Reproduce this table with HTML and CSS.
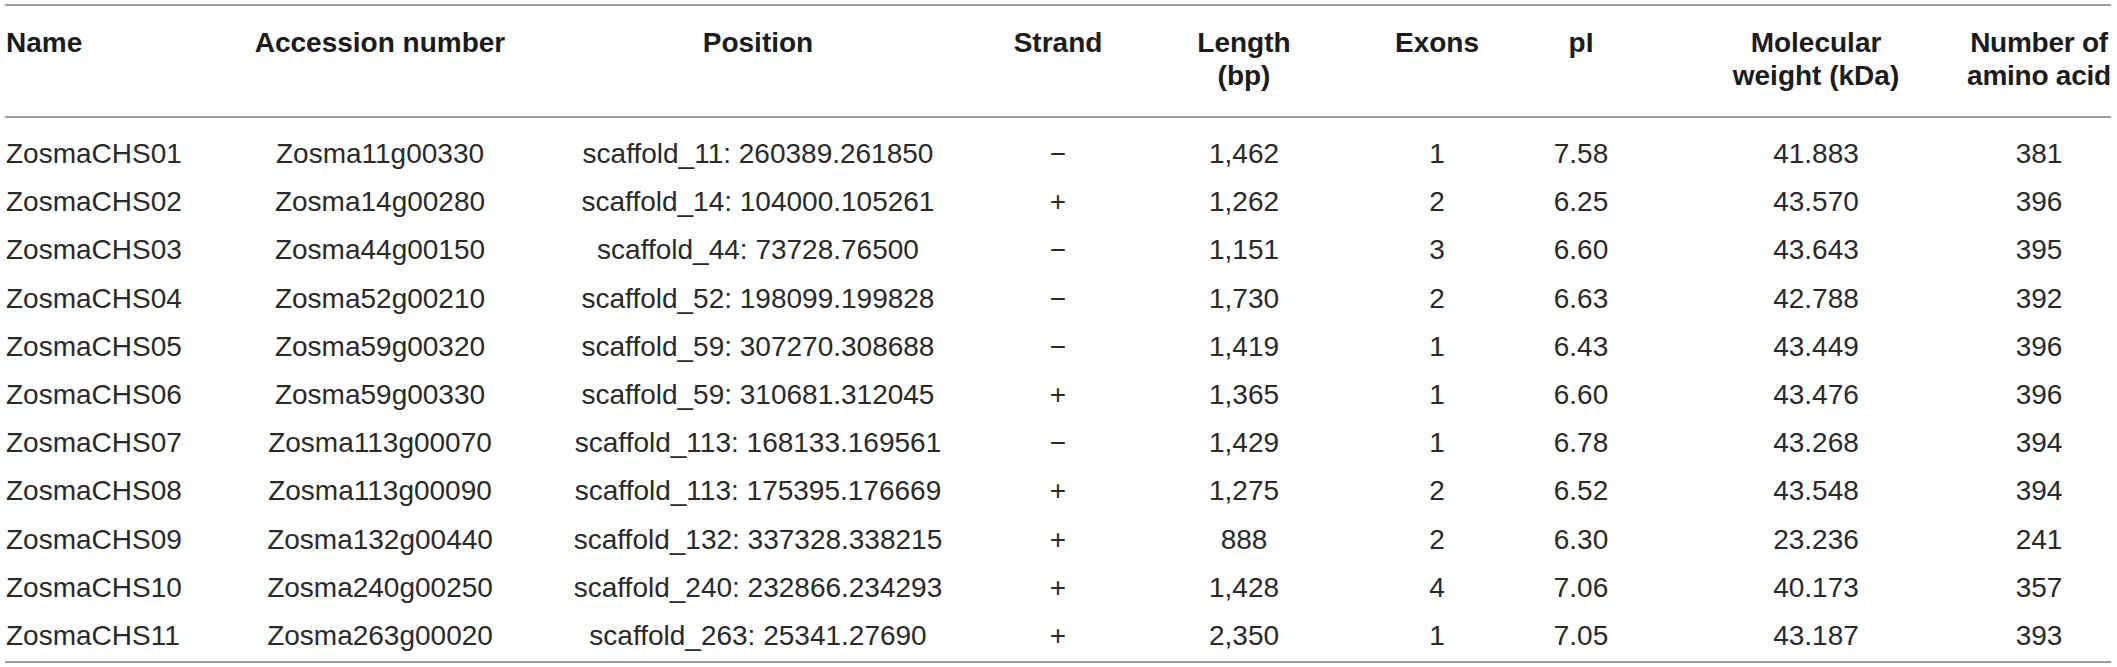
FILE: index.html
```html
<!DOCTYPE html>
<html lang="en">
<head>
<meta charset="utf-8">
<title>CHS genes</title>
<link rel="stylesheet" href="styles.css">
</head>
<body>
<table class="gene-table">
  <colgroup>
    <col class="c-name">
    <col class="c-acc">
    <col class="c-pos">
    <col class="c-strand">
    <col class="c-len">
    <col class="c-exon">
    <col class="c-pi">
    <col class="c-mw">
    <col class="c-aa">
  </colgroup>
  <thead>
    <tr>
      <th class="left">Name</th>
      <th>Accession number</th>
      <th>Position</th>
      <th>Strand</th>
      <th>Length<br>(bp)</th>
      <th>Exons</th>
      <th>pI</th>
      <th>Molecular<br>weight (kDa)</th>
      <th class="tight">Number of<br>amino acid</th>
    </tr>
  </thead>
  <tbody>
    <tr><td class="left">ZosmaCHS01</td><td>Zosma11g00330</td><td>scaffold_11: 260389.261850</td><td>−</td><td>1,462</td><td>1</td><td>7.58</td><td>41.883</td><td>381</td></tr>
    <tr><td class="left">ZosmaCHS02</td><td>Zosma14g00280</td><td>scaffold_14: 104000.105261</td><td>+</td><td>1,262</td><td>2</td><td>6.25</td><td>43.570</td><td>396</td></tr>
    <tr><td class="left">ZosmaCHS03</td><td>Zosma44g00150</td><td>scaffold_44: 73728.76500</td><td>−</td><td>1,151</td><td>3</td><td>6.60</td><td>43.643</td><td>395</td></tr>
    <tr><td class="left">ZosmaCHS04</td><td>Zosma52g00210</td><td>scaffold_52: 198099.199828</td><td>−</td><td>1,730</td><td>2</td><td>6.63</td><td>42.788</td><td>392</td></tr>
    <tr><td class="left">ZosmaCHS05</td><td>Zosma59g00320</td><td>scaffold_59: 307270.308688</td><td>−</td><td>1,419</td><td>1</td><td>6.43</td><td>43.449</td><td>396</td></tr>
    <tr><td class="left">ZosmaCHS06</td><td>Zosma59g00330</td><td>scaffold_59: 310681.312045</td><td>+</td><td>1,365</td><td>1</td><td>6.60</td><td>43.476</td><td>396</td></tr>
    <tr><td class="left">ZosmaCHS07</td><td>Zosma113g00070</td><td>scaffold_113: 168133.169561</td><td>−</td><td>1,429</td><td>1</td><td>6.78</td><td>43.268</td><td>394</td></tr>
    <tr><td class="left">ZosmaCHS08</td><td>Zosma113g00090</td><td>scaffold_113: 175395.176669</td><td>+</td><td>1,275</td><td>2</td><td>6.52</td><td>43.548</td><td>394</td></tr>
    <tr><td class="left">ZosmaCHS09</td><td>Zosma132g00440</td><td>scaffold_132: 337328.338215</td><td>+</td><td>888</td><td>2</td><td>6.30</td><td>23.236</td><td>241</td></tr>
    <tr><td class="left">ZosmaCHS10</td><td>Zosma240g00250</td><td>scaffold_240: 232866.234293</td><td>+</td><td>1,428</td><td>4</td><td>7.06</td><td>40.173</td><td>357</td></tr>
    <tr><td class="left">ZosmaCHS11</td><td>Zosma263g00020</td><td>scaffold_263: 25341.27690</td><td>+</td><td>2,350</td><td>1</td><td>7.05</td><td>43.187</td><td>393</td></tr>
  </tbody>
</table>
</body>
</html>
```

FILE: styles.css
```css
html, body {
  margin: 0;
  padding: 0;
  background: #ffffff;
}

body {
  font-family: "Liberation Sans", Arial, sans-serif;
  color: #2a2a2a;
}

.gene-table {
  margin: 4px 0 0 5px;
  width: 2106px;
  table-layout: fixed;
  border-collapse: collapse;
  border-top: 2px solid #9c9c9c;
  border-bottom: 2px solid #9c9c9c;
}

.c-name { width: 244px; }
.c-acc { width: 262px; }
.c-pos { width: 494px; }
.c-strand { width: 106px; }
.c-len { width: 266px; }
.c-exon { width: 120px; }
.c-pi { width: 168px; }
.c-mw { width: 302px; }
.c-aa { width: 144px; }

.gene-table thead tr {
  border-bottom: 2px solid #9c9c9c;
}

.gene-table th {
  font-size: 28px;
  font-weight: bold;
  line-height: 33px;
  color: #1c1c1c;
  text-align: center;
  vertical-align: top;
  padding: 20px 0 24px 0;
  white-space: nowrap;
}

.gene-table th.tight {
  letter-spacing: -0.25px;
}

.gene-table td {
  font-size: 28px;
  line-height: 32.2px;
  text-align: center;
  padding: 8px 0;
  white-space: nowrap;
}

.gene-table tbody tr:first-child td {
  padding-top: 20px;
}

.gene-table tbody tr:last-child td {
  padding-bottom: 9px;
}

.gene-table .left {
  text-align: left;
  padding-left: 1px;
}
```
